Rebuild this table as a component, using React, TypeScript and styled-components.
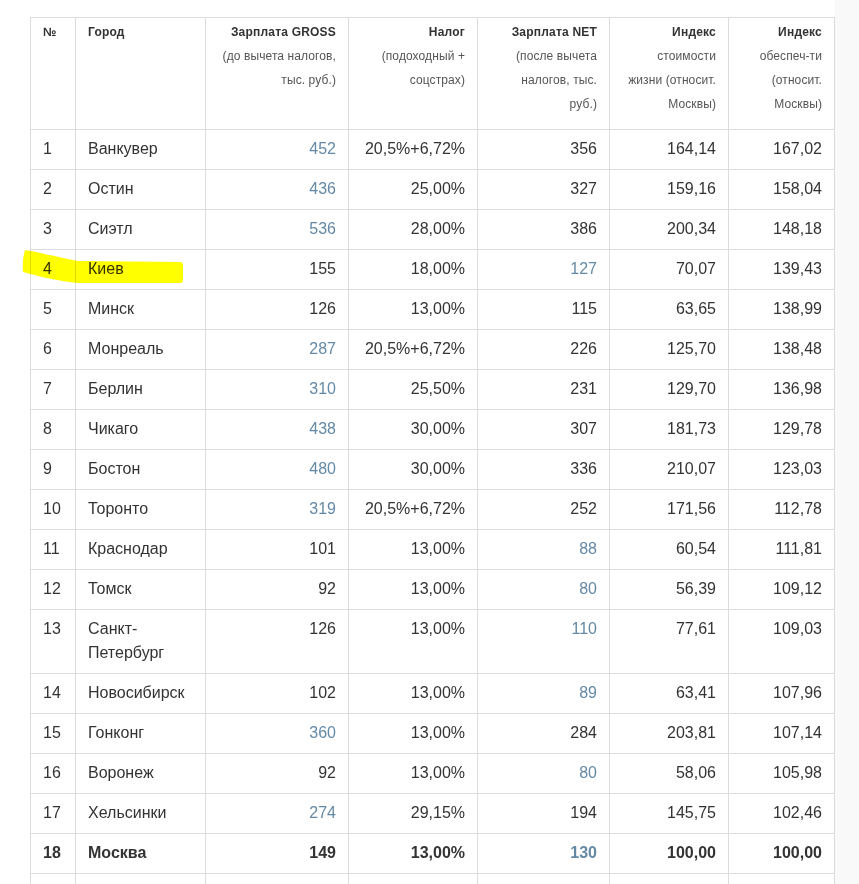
import styled, { createGlobalStyle } from 'styled-components'

const GlobalStyle = createGlobalStyle`
  html, body {
    margin: 0;
    padding: 0;
    background: #ffffff;
  }

  body {
    font-family: 'Liberation Sans', Arial, sans-serif;
    color: #333333;
  }
`

const Page = styled.div`
  display: flex;
  min-height: 884px;
`

const Main = styled.main`
  width: 835px;
  flex-shrink: 0;
  background: #ffffff;
  padding: 17px 0 0 30px;
  box-sizing: border-box;
`

const Sidebar = styled.aside`
  flex: 1;
  background: #f9f9f9;
`

const TableWrap = styled.div`
  position: relative;
  width: 804px;
`

const Table = styled.table`
  width: 804px;
  border-collapse: collapse;
  table-layout: fixed;
`

const HeadCell = styled.th<{ $align?: 'left' | 'right' }>`
  border: 1px solid #dcdcdc;
  padding: 2px 12px 13px;
  vertical-align: top;
  text-align: ${({ $align }) => $align ?? 'right'};
  font-size: 12px;
  line-height: 24px;
  font-weight: 400;
  color: #555555;
  letter-spacing: 0.1px;
`

const HeadTitle = styled.strong`
  display: block;
  font-weight: 700;
  color: #333333;
  letter-spacing: 0.2px;
`

const Row = styled.tr<{ $bold?: boolean }>`
  font-weight: ${({ $bold }) => ($bold ? 700 : 400)};
`

const Cell = styled.td<{ $align?: 'left' | 'right'; $accent?: boolean }>`
  border: 1px solid #dcdcdc;
  padding: 7px 12px 8px;
  vertical-align: top;
  text-align: ${({ $align }) => $align ?? 'right'};
  font-size: 16px;
  line-height: 24px;
  color: ${({ $accent }) => ($accent ? '#6489a5' : '#333333')};
`

const Highlight = styled.svg`
  position: absolute;
  left: -8px;
  top: 233px;
  width: 162px;
  height: 34px;
  mix-blend-mode: multiply;
  pointer-events: none;
`

type CityRow = {
  n: number
  city: string
  gross: string
  tax: string
  net: string
  cost: string
  wealth: string
  accent?: 'gross' | 'net'
  bold?: boolean
}

const rows: CityRow[] = [
  { n: 1, city: 'Ванкувер', gross: '452', tax: '20,5%+6,72%', net: '356', cost: '164,14', wealth: '167,02', accent: 'gross' },
  { n: 2, city: 'Остин', gross: '436', tax: '25,00%', net: '327', cost: '159,16', wealth: '158,04', accent: 'gross' },
  { n: 3, city: 'Сиэтл', gross: '536', tax: '28,00%', net: '386', cost: '200,34', wealth: '148,18', accent: 'gross' },
  { n: 4, city: 'Киев', gross: '155', tax: '18,00%', net: '127', cost: '70,07', wealth: '139,43', accent: 'net' },
  { n: 5, city: 'Минск', gross: '126', tax: '13,00%', net: '115', cost: '63,65', wealth: '138,99' },
  { n: 6, city: 'Монреаль', gross: '287', tax: '20,5%+6,72%', net: '226', cost: '125,70', wealth: '138,48', accent: 'gross' },
  { n: 7, city: 'Берлин', gross: '310', tax: '25,50%', net: '231', cost: '129,70', wealth: '136,98', accent: 'gross' },
  { n: 8, city: 'Чикаго', gross: '438', tax: '30,00%', net: '307', cost: '181,73', wealth: '129,78', accent: 'gross' },
  { n: 9, city: 'Бостон', gross: '480', tax: '30,00%', net: '336', cost: '210,07', wealth: '123,03', accent: 'gross' },
  { n: 10, city: 'Торонто', gross: '319', tax: '20,5%+6,72%', net: '252', cost: '171,56', wealth: '112,78', accent: 'gross' },
  { n: 11, city: 'Краснодар', gross: '101', tax: '13,00%', net: '88', cost: '60,54', wealth: '111,81', accent: 'net' },
  { n: 12, city: 'Томск', gross: '92', tax: '13,00%', net: '80', cost: '56,39', wealth: '109,12', accent: 'net' },
  { n: 13, city: 'Санкт-Петербург', gross: '126', tax: '13,00%', net: '110', cost: '77,61', wealth: '109,03', accent: 'net' },
  { n: 14, city: 'Новосибирск', gross: '102', tax: '13,00%', net: '89', cost: '63,41', wealth: '107,96', accent: 'net' },
  { n: 15, city: 'Гонконг', gross: '360', tax: '13,00%', net: '284', cost: '203,81', wealth: '107,14', accent: 'gross' },
  { n: 16, city: 'Воронеж', gross: '92', tax: '13,00%', net: '80', cost: '58,06', wealth: '105,98', accent: 'net' },
  { n: 17, city: 'Хельсинки', gross: '274', tax: '29,15%', net: '194', cost: '145,75', wealth: '102,46', accent: 'gross' },
  { n: 18, city: 'Москва', gross: '149', tax: '13,00%', net: '130', cost: '100,00', wealth: '100,00', accent: 'net', bold: true },
]

const columns = [45, 130, 143, 129, 132, 119, 106]

export default function App() {
  return (
    <>
      <GlobalStyle />
      <Page>
        <Main>
          <TableWrap>
            <Table>
              <colgroup>
                {columns.map((w, i) => (
                  <col key={i} style={{ width: w }} />
                ))}
              </colgroup>
              <thead>
                <tr>
                  <HeadCell $align="left">
                    <HeadTitle>№</HeadTitle>
                  </HeadCell>
                  <HeadCell $align="left">
                    <HeadTitle>Город</HeadTitle>
                  </HeadCell>
                  <HeadCell>
                    <HeadTitle>Зарплата GROSS</HeadTitle>
                    (до вычета налогов,
                    <br />
                    тыс. руб.)
                  </HeadCell>
                  <HeadCell>
                    <HeadTitle>Налог</HeadTitle>
                    (подоходный +
                    <br />
                    соцстрах)
                  </HeadCell>
                  <HeadCell>
                    <HeadTitle>Зарплата NET</HeadTitle>
                    (после вычета
                    <br />
                    налогов, тыс.
                    <br />
                    руб.)
                  </HeadCell>
                  <HeadCell>
                    <HeadTitle>Индекс</HeadTitle>
                    стоимости
                    <br />
                    жизни (относит.
                    <br />
                    Москвы)
                  </HeadCell>
                  <HeadCell>
                    <HeadTitle>Индекс</HeadTitle>
                    обеспеч-ти
                    <br />
                    (относит.
                    <br />
                    Москвы)
                  </HeadCell>
                </tr>
              </thead>
              <tbody>
                {rows.map((r) => (
                  <Row key={r.n} $bold={r.bold}>
                    <Cell $align="left">{r.n}</Cell>
                    <Cell $align="left">{r.city}</Cell>
                    <Cell $accent={r.accent === 'gross'}>{r.gross}</Cell>
                    <Cell>{r.tax}</Cell>
                    <Cell $accent={r.accent === 'net'}>{r.net}</Cell>
                    <Cell>{r.cost}</Cell>
                    <Cell>{r.wealth}</Cell>
                  </Row>
                ))}
                <Row>
                  <Cell $align="left">&nbsp;</Cell>
                  <Cell $align="left">&nbsp;</Cell>
                  <Cell>&nbsp;</Cell>
                  <Cell>&nbsp;</Cell>
                  <Cell>&nbsp;</Cell>
                  <Cell>&nbsp;</Cell>
                  <Cell>&nbsp;</Cell>
                </Row>
              </tbody>
            </Table>
            <Highlight viewBox="0 0 162 34" aria-hidden="true">
              <path
                d="M3 0 C 20 3, 40 8, 56 11 L 158 12 Q 161 12 161 15 L 161 30 Q 161 33 158 33 L 56 33 C 38 31, 18 27, 1 22 Q 0 10 3 0 Z"
                fill="#ffff00"
              />
            </Highlight>
          </TableWrap>
        </Main>
        <Sidebar />
      </Page>
    </>
  )
}
